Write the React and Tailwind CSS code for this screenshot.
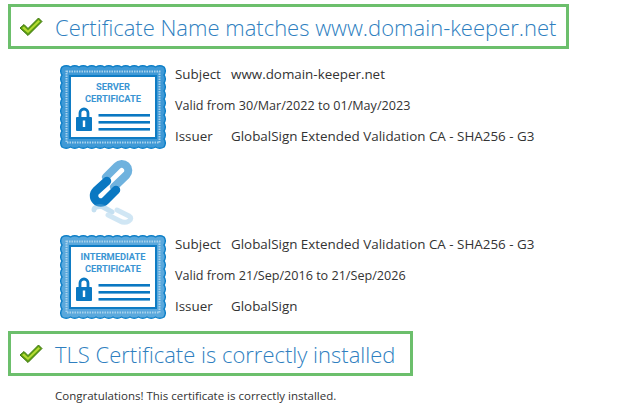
const FONT = "font-['Open_Sans','Noto_Sans',sans-serif]";

function scallopPath(x0, y0, x1, y1, nx, ny, r) {
  // wavy edge going round the rectangle
  const stepX = (x1 - x0) / nx;
  const stepY = (y1 - y0) / ny;
  let d = `M${x0} ${y0}`;
  for (let i = 0; i < nx; i++) d += ` q${stepX / 2} ${-r} ${stepX} 0`;
  for (let i = 0; i < ny; i++) d += ` q${r} ${stepY / 2} 0 ${stepY}`;
  for (let i = 0; i < nx; i++) d += ` q${-stepX / 2} ${r} ${-stepX} 0`;
  for (let i = 0; i < ny; i++) d += ` q${-r} ${-stepY / 2} 0 ${-stepY}`;
  return d + 'Z';
}

function CheckIcon() {
  return (
    <svg width="24" height="20" viewBox="0 0 24 20" className="shrink-0">
      <path d="M1 11 L5 7.5 L9 11.5 L19.5 1 L23 4.5 L9 18.5 Z" fill="#5f9e12" stroke="#3f7a10" strokeWidth="1" strokeLinejoin="round" />
      <path d="M3 11 L5 9.5 L9 13.5 L19.5 3 L21 4.5 L9 16 Z" fill="#b6dc34" />
    </svg>
  );
}

function Banner({ children, width }) {
  return (
    <div className={`${width} h-[45px] border-[3px] border-[#6cbf6c] flex items-center pl-[8px] gap-[12px]`}>
      <CheckIcon />
      <span className="text-[22px] font-light leading-none text-[#2f7fbf] whitespace-nowrap">{children}</span>
    </div>
  );
}

function Badge({ lines, light }) {
  return (
    <svg width="106" height="86" viewBox="0 0 106 86" className="shrink-0">
      <path d={scallopPath(2, 3, 104, 83, 12, 10, 2.6)} fill={light ? '#5aa8dc' : '#3f99d6'} stroke="#0f80c8" strokeWidth="1.4" />
      <rect x="6.5" y="7.5" width="93" height="71" fill="none" stroke="#a9d2ec" strokeWidth="2" strokeDasharray="1.5 1" />
      <rect x="10" y="12" width="86" height="62" fill="#ffffff" stroke="#0f7cc4" strokeWidth="2" />
      <text x="53" y="26" textAnchor="middle" fontSize="9.3" fontWeight="700" fill="#3a95d3" fontFamily="Roboto, sans-serif">{lines[0]}</text>
      <text x="53" y="38" textAnchor="middle" fontSize="9.3" fontWeight="700" fill="#3a95d3" fontFamily="Roboto, sans-serif">{lines[1]}</text>
      <path d="M20 53 v-4 a4 4 0 0 1 8 0 v4" fill="none" stroke="#0a78c2" strokeWidth="2.8" />
      <rect x="16" y="53" width="16" height="14" rx="1" fill="#0a78c2" />
      <rect x="22.8" y="56.5" width="2.4" height="6.5" fill="#ffffff" />
      <rect x="38.5" y="50" width="51.5" height="2.6" fill="#0a78c2" />
      <rect x="38.5" y="57" width="51.5" height="2.6" fill="#0a78c2" />
      <rect x="38.5" y="64" width="51.5" height="2.6" fill="#0a78c2" />
    </svg>
  );
}

function ChainIcon() {
  return (
    <svg width="50" height="68" viewBox="0 0 50 68" fill="none" className="ml-[87px] mt-[9px] mb-[7px] shrink-0">
      <g strokeLinecap="round" strokeLinejoin="round">
        <path d="M19 18 L30 7 a6.5 6.5 0 0 1 9.5 9 L27 28" stroke="#6fb2de" strokeWidth="8" />
        <path d="M20 22 L9 32 a6.5 6.5 0 0 0 9.5 9.5 L29 31" stroke="#0a78c2" strokeWidth="8.5" />
        <g opacity="0.4">
          <path d="M7 51 a6 3.5 0 0 1 9 -3 L25 53" stroke="#6fb2de" strokeWidth="5" />
          <path d="M21 56 L33 62 a6 3.5 0 0 0 9 -5 L30 51" stroke="#8cc3e6" strokeWidth="5" />
        </g>
      </g>
    </svg>
  );
}

function CertRow({ lines, light, subject, valid, issuer }) {
  return (
    <div className="flex pl-[60px] gap-[9px]">
      <Badge lines={lines} light={light} />
      <div className="flex flex-col gap-[11px] text-[13.4px] leading-[20px] text-[#333] whitespace-nowrap">
        <div className="flex"><span className="w-[56px]">Subject</span><span>{subject}</span></div>
        <div className="text-[12.6px] pt-[1px] -mb-[1px]">{valid}</div>
        <div className="flex"><span className="w-[56px]">Issuer</span><span>{issuer}</span></div>
      </div>
    </div>
  );
}

export default function App() {
  return (
    <div className={`${FONT} w-[640px] h-[420px] bg-white overflow-hidden pt-[4px] pl-[8px]`}>
      <Banner width="w-[561px]">Certificate Name matches www.domain-keeper.net</Banner>
      <div className="-ml-[8px] mt-[15px] flex flex-col">
        <CertRow
          lines={['SERVER', 'CERTIFICATE']}
          subject="www.domain-keeper.net"
          valid="Valid from 30/Mar/2022 to 01/May/2023"
          issuer="GlobalSign Extended Validation CA - SHA256 - G3"
        />
        <ChainIcon />
        <CertRow
          light
          lines={['INTERMEDIATE', 'CERTIFICATE']}
          subject="GlobalSign Extended Validation CA - SHA256 - G3"
          valid="Valid from 21/Sep/2016 to 21/Sep/2026"
          issuer="GlobalSign"
        />
      </div>
      <div className="mt-[11px]">
        <Banner width="w-[405px]">TLS Certificate is correctly installed</Banner>
      </div>
      <p className="ml-[47px] mt-[12px] text-[11.5px] leading-[16px] text-[#333]">Congratulations! This certificate is correctly installed.</p>
    </div>
  );
}
